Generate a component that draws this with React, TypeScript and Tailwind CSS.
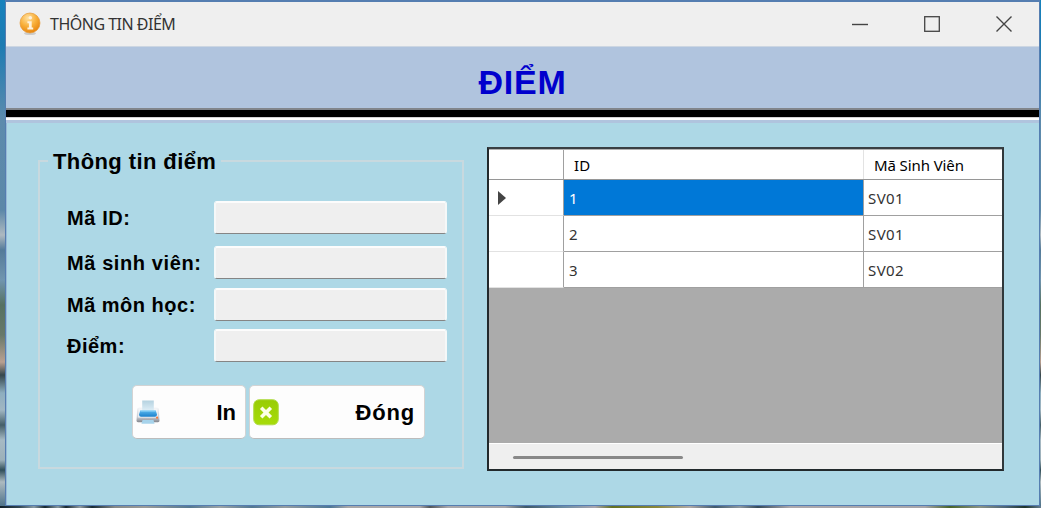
import type { ReactNode } from "react";

function InfoIcon() {
  return (
    <svg width="22" height="24" viewBox="0 0 22 24" className="shrink-0">
      <defs>
        <radialGradient id="orb" cx="0.4" cy="0.25" r="0.8">
          <stop offset="0" stopColor="#ffe0a0" />
          <stop offset="0.5" stopColor="#f9b13c" />
          <stop offset="1" stopColor="#e57f08" />
        </radialGradient>
      </defs>
      <ellipse cx="11" cy="21.5" rx="6" ry="1.6" fill="#cccccc" />
      <circle cx="11" cy="11" r="10" fill="url(#orb)" stroke="#e69a35" strokeWidth="0.7" />
      <circle cx="11.3" cy="5.8" r="1.8" fill="#fff2dc" />
      <path d="M8.4 9.2h4.3v6.2h1.5v2H8.4v-2h1.5v-4.2H8.4z" fill="#fff2dc" />
    </svg>
  );
}

function PrinterIcon() {
  return (
    <svg width="24" height="24" viewBox="0 0 24 24" className="shrink-0">
      <defs>
        <linearGradient id="sheet" x1="0" y1="0" x2="0" y2="1">
          <stop offset="0" stopColor="#b5d2e0" />
          <stop offset="1" stopColor="#e3f2fa" />
        </linearGradient>
        <linearGradient id="case" x1="0" y1="0" x2="0" y2="1">
          <stop offset="0" stopColor="#f4f5f7" />
          <stop offset="0.65" stopColor="#c9ccd3" />
          <stop offset="1" stopColor="#83868d" />
        </linearGradient>
        <linearGradient id="tray" x1="0" y1="0" x2="0" y2="1">
          <stop offset="0" stopColor="#5bb8ee" />
          <stop offset="1" stopColor="#1a7fcb" />
        </linearGradient>
      </defs>
      <path d="M1.2 9Q1.2 7.5 3.2 7.5H20.8Q22.8 7.5 22.8 9L23.5 20.8Q23.5 22.2 22 22.2H2Q.5 22.2.5 20.8z" fill="url(#case)" />
      <path d="M2.6 8.5H21.4L21.8 17.5H2.2z" fill="#f3f5f7" />
      <path d="M6.2.5H17.8V12H6.2z" fill="url(#sheet)" />
      <path d="M4.2 10.5H19.8L21 14.5Q21 16.8 19 16.8H5Q3 16.8 3 14.5z" fill="url(#tray)" />
      <path d="M4.4 11H19.6" stroke="#96d8f8" strokeWidth="1" />
      <path d="M6.5 20H17.5L18.5 23.7H5.5z" fill="#a7d3eb" />
      <circle cx="21.1" cy="17.7" r="1.1" fill="#f4783c" />
    </svg>
  );
}

function CloseBadge() {
  return (
    <svg width="26" height="27" viewBox="0 0 26 27" className="shrink-0">
      <defs>
        <linearGradient id="green" x1="0" y1="0" x2="0" y2="1">
          <stop offset="0" stopColor="#98cc05" />
          <stop offset="1" stopColor="#a7dc09" />
        </linearGradient>
      </defs>
      <rect x="0.7" y="0.7" width="24.6" height="25.1" rx="5.5" fill="url(#green)" stroke="#b2dc4a" />
      <path d="M8.2 8.7L17.8 18.3M17.8 8.7L8.2 18.3" stroke="#fcffe8" strokeWidth="3.6" />
    </svg>
  );
}

function Field({ label, className, labelClass }: { label: string; className: string; labelClass: string }) {
  return (
    <div className={`flex h-[33px] items-center ${className}`}>
      <label className="w-[147px] shrink-0 pt-[1px] text-[20px] leading-[20px] font-bold whitespace-nowrap">
        <span className={labelClass}>{label}</span>
      </label>
      <input
        readOnly
        aria-label={label}
        className="h-[33px] w-[233px] rounded-[3px] border-2 border-t-[#fcfcfc] border-r-[#f5f8f8] border-b-[#858585] border-l-[#f5f8f8] bg-[#efefef] outline-none [border-bottom-width:1.5px]"
      />
    </div>
  );
}

function ActionButton({ icon, label, className, labelClass }: { icon: ReactNode; label: string; className: string; labelClass: string }) {
  return (
    <button className={`flex h-[54px] items-center justify-between rounded-[5px] border border-[#d3d3d3] border-b-[#bcbcbc] bg-[#fdfdfd] pl-[3px] text-[22px] font-bold ${className}`}>
      {icon}
      <span className={labelClass}>{label}</span>
    </button>
  );
}

const records = [
  { id: "1", student: "SV01" },
  { id: "2", student: "SV01" },
  { id: "3", student: "SV02" },
];

function RecordGrid() {
  return (
    <div className="mt-[24px] ml-[23px] flex h-[324px] w-[517px] flex-col overflow-hidden border-2 border-t-[#393f43] border-r-[#30383b] border-b-[#22292c] border-l-[#22292c] bg-[#ababab] font-['Noto_Sans',sans-serif] text-[15px] text-[#333]">
      <div className="flex h-[31px] shrink-0 border-t border-b border-t-[#b2b2b2] border-b-[#969696] bg-white text-black">
        <div className="w-[75px] border-r border-[#a0a0a0]" />
        <div className="flex w-[300px] items-center border-r border-[#e3e3e3] pt-[2px] pl-[10px]">
          <span className="tracking-[0.1px]">ID</span>
        </div>
        <div className="flex items-center pt-[2px] pl-[10px]">
          <span className="tracking-[-0.1px] whitespace-nowrap">Mã Sinh Viên</span>
        </div>
      </div>
      {records.map((record, index) => (
        <div key={record.id} className="flex h-[36px] shrink-0 bg-white">
          <div className="flex w-[75px] items-center border-r border-b border-r-[#a0a0a0] border-b-[#e2e2e2] pl-[9px]">
            {index === 0 && (
              <svg width="8" height="14" viewBox="0 0 8 14">
                <path d="M0 0L8 7L0 14z" fill="#444" />
              </svg>
            )}
          </div>
          <div className={`flex w-[300px] items-center border-r border-b border-[#a0a0a0] pt-[1px] pl-[5px] ${index === 0 ? "bg-[#0078d7] text-white" : ""}`}>
            {record.id}
          </div>
          <div className="flex flex-1 items-center border-b border-[#a0a0a0] pt-[1px] pl-[4px]">
            <span className="tracking-[0.4px]">{record.student}</span>
          </div>
        </div>
      ))}
      <div className="mt-auto h-[26px] shrink-0 border-t border-white bg-[#efefef] pt-[12px] pl-[24px]">
        <div className="h-[3px] w-[170px] rounded-full bg-[#888]" />
      </div>
    </div>
  );
}

export default function App() {
  return (
    <div className="h-[508px] w-[1041px] overflow-hidden bg-[linear-gradient(180deg,#1782bd_0px,#1c7bb2_45px,#5d8bad_120px,#5c88a8_210px,#aeb9c0_235px,#547b99_250px,#7195af_280px,#567261_305px,#68796a_335px,#b9a091_362px,#36474c_375px,#8eaebf_393px,#a1b6c2_410px,#455f69_425px,#a7bac4_440px,#9cb0b9_460px,#304e59_470px,#adbac0_482px,#476d85_508px)] font-['Liberation_Sans',Arial,sans-serif] text-black">
      <div className="h-[508px] bg-[linear-gradient(90deg,#101e28_0px,#344955_20px,#899ba5_34px,#162830_45px,#8798a0_58px,#17272f_66px,#929ca1_80px,#172a34_92px,#888a88_115px,#9b9b98_145px,#557992_190px,#9da3a5_220px,#527792_252px,#969da0_285px,#4d7796_330px,#aaa8a8_348px,#aaa7ab_420px,#51565a_430px,#aaa8ac_448px,#a7a5a9_505px,#3f5969_526px,#6d8da4_564px,#aaa5ae_595px,#637022_612px,#8b873a_657px,#b1a9a5_690px,#405a6d_715px,#8e989f_740px,#354b5a_758px,#ada8ac_790px,#a8a5a9_925px,#486329_950px,#8b9385_980px,#4e6678_1005px,#1f342c_1025px,#657d91_1041px)] bg-[length:1041px_2px] bg-bottom bg-no-repeat">
        <main className="mr-[1px] ml-[5px] flex h-[506px] w-[1035px] flex-col border border-t-2 border-[#557eb1] bg-[#add8e6] shadow-[inset_1px_0_#98b9d5]">
          <header className="flex h-[45px] shrink-0 items-center border-b border-[#ccd6e2] bg-[#efefef]">
            <div className="ml-[13px] flex items-center gap-[9px]">
              <InfoIcon />
              <span className="font-['Noto_Sans',sans-serif] text-[16px] tracking-[-0.5px] whitespace-nowrap text-[#333]">THÔNG TIN ĐIỂM</span>
            </div>
            <div className="mr-[27px] ml-auto flex items-center gap-[56px] text-[#444]">
              <svg width="16" height="16"><path d="M0 8.5H16" stroke="currentColor" strokeWidth="1.4" /></svg>
              <svg width="16" height="16"><rect x="0.7" y="0.7" width="14.6" height="14.6" fill="none" stroke="currentColor" strokeWidth="1.3" /></svg>
              <svg width="16" height="16"><path d="M.5.5L15.5 15.5M15.5.5L.5 15.5" stroke="currentColor" strokeWidth="1.4" /></svg>
            </div>
          </header>
          <section className="flex h-[61px] shrink-0 justify-center bg-[#b0c4de] pt-[15px]">
            <h1 className="text-[34px] leading-[40px] font-bold text-[#0000cd]">
              <span className="tracking-[0.8px]">ĐIỂM</span>
            </h1>
          </section>
          <div className="h-[15px] shrink-0 border-t-2 border-b-[3px] border-t-[#81858b] border-b-[#b0c4de] bg-[linear-gradient(#000_0_7px,#d5d2d5_7px_8px,#fff_8px_10px)]" />
          <div className="flex">
            <fieldset className="mt-[27px] ml-[32px] h-[319px] w-[426px] border-2 border-[#c8d9df]">
              <legend className="ml-[8px] h-[22px] px-[5px] text-[22px] leading-[24px] font-bold whitespace-nowrap">
                <span className="tracking-[0.4px]">Thông tin điểm</span>
              </legend>
              <div className="pl-[27px]">
                <Field label="Mã ID:" className="mt-[29px]" labelClass="tracking-[0.6px]" />
                <Field label="Mã sinh viên:" className="mt-[12px]" labelClass="tracking-[0.6px]" />
                <Field label="Mã môn học:" className="mt-[9px]" labelClass="tracking-[0.5px]" />
                <Field label="Điểm:" className="mt-[8px]" labelClass="tracking-[0.5px]" />
              </div>
              <div className="mt-[23px] ml-[92px] flex gap-[3px]">
                <ActionButton icon={<PrinterIcon />} label="In" className="w-[114px] pr-[9px]" labelClass="tracking-[0px]" />
                <ActionButton icon={<CloseBadge />} label="Đóng" className="w-[176px] pr-[9px]" labelClass="tracking-[0.8px]" />
              </div>
            </fieldset>
            <RecordGrid />
          </div>
        </main>
      </div>
    </div>
  );
}
